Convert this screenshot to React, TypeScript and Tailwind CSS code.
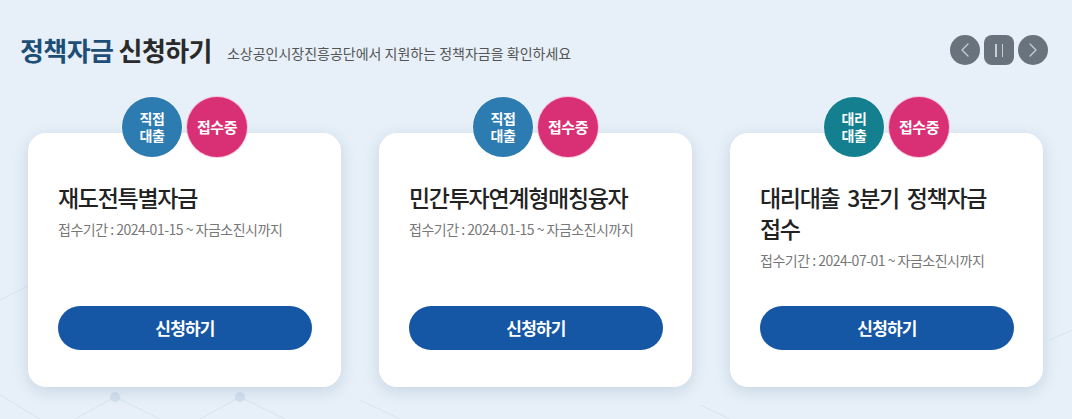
import { ChevronLeft, ChevronRight } from 'lucide-react';

interface Fund {
    type: [string, string];
    typeColor: string;
    title: string;
    period: string;
}

const funds: Fund[] = [
    { type: ['직접', '대출'], typeColor: 'bg-[#2c7bb1]', title: '재도전특별자금', period: '접수기간 : 2024-01-15 ~ 자금소진시까지' },
    { type: ['직접', '대출'], typeColor: 'bg-[#2c7bb1]', title: '민간투자연계형매칭융자', period: '접수기간 : 2024-01-15 ~ 자금소진시까지' },
    { type: ['대리', '대출'], typeColor: 'bg-[#137f8f]', title: '대리대출 3분기 정책자금 접수', period: '접수기간 : 2024-07-01 ~ 자금소진시까지' },
];

function Network() {
    // faint decorative mesh behind the cards
    return (
        <svg className="pointer-events-none absolute inset-0 h-full w-full" viewBox="0 0 1072 419" preserveAspectRatio="none">
            <g stroke="#d6e3ef" strokeWidth="1" fill="none">
                <path d="M0 300 L60 270" />
                <path d="M0 395 L40 419" />
                <path d="M115 397 L75 419" />
                <path d="M115 397 L160 419" />
                <path d="M240 397 L200 419" />
                <path d="M240 397 L285 419" />
                <path d="M1072 330 L1050 340" />
                <path d="M360 400 L400 419" />
                <path d="M700 405 L730 419" />
            </g>
            <g fill="#d3e1ed">
                <circle cx="115" cy="397" r="5" />
                <circle cx="240" cy="397" r="5" />
            </g>
        </svg>
    );
}

function FundCard({ fund }: { fund: Fund }) {
    return (
        <div className="flex w-[313px] flex-col">
            <div className="relative z-10 -mb-[24px] flex justify-center gap-[5px]">
                <div className={`flex h-[60px] w-[60px] items-center justify-center rounded-full ${fund.typeColor} text-center text-[14px] leading-[17px] font-semibold tracking-[-0.5px] text-white ring-1 ring-white/30`}>
                    <span>
                        {fund.type[0]}
                        <br />
                        {fund.type[1]}
                    </span>
                </div>
                <div className="flex h-[60px] w-[60px] items-center justify-center rounded-full bg-[#d92f74] text-[15px] font-semibold tracking-[-0.5px] text-white ring-1 ring-[#f7a8c8]/60">
                    접수중
                </div>
            </div>
            <div className="flex h-[254px] flex-col rounded-[18px] bg-white pt-[49px] pr-[29px] pb-[37px] pl-[30px] shadow-[0_4px_16px_rgba(30,70,120,0.16)]">
                <h3 className="text-[23px] leading-[31px] font-medium tracking-[-1.3px] break-keep text-[#222] [word-spacing:4px]">{fund.title}</h3>
                <p className="mt-[5px] text-[14px] leading-[22px] tracking-[-0.5px] text-[#777]">{fund.period}</p>
                <button className="mt-auto h-[44px] w-full rounded-full bg-[#1657a5] text-[17px] font-bold tracking-[-0.8px] text-white">
                    신청하기
                </button>
            </div>
        </div>
    );
}

export default function App() {
    return (
        <div className="relative h-[419px] w-[1072px] overflow-hidden bg-[#e7f0f8] font-['Noto_Sans_CJK_KR',sans-serif]">
            <Network />
            <div className="relative flex items-center justify-between pt-[34px] pr-6 pl-5">
                <div className="flex items-end gap-[15px]">
                    <h2 className="text-[26px] leading-[32px] font-bold tracking-[-0.6px] text-[#2a2a2a]">
                        <span className="text-[#1d4e77]">정책자금</span> 신청하기
                    </h2>
                    <p className="pb-[3px] text-[14px] leading-[20px] tracking-[0px] text-[#555]">소상공인시장진흥공단에서 지원하는 정책자금을 확인하세요</p>
                </div>
                <div className="flex items-center gap-[4px]">
                    <button className="flex h-[30px] w-[30px] items-center justify-center rounded-full bg-[#68737d] text-[#c8ced4]">
                        <ChevronLeft className="h-[24px] w-[24px]" strokeWidth={1.3} />
                    </button>
                    <button className="flex h-[30px] w-[30px] items-center justify-center gap-[5px] rounded-[8px] bg-[#68737d]">
                        <span className="h-[13px] w-[1.5px] bg-[#c8ced4]" />
                        <span className="h-[13px] w-[1.5px] bg-[#c8ced4]" />
                    </button>
                    <button className="flex h-[30px] w-[30px] items-center justify-center rounded-full bg-[#68737d] text-[#c8ced4]">
                        <ChevronRight className="h-[24px] w-[24px]" strokeWidth={1.3} />
                    </button>
                </div>
            </div>
            <div className="relative mt-[31px] flex gap-[38px] px-[28px]">
                {funds.map((f) => (
                    <FundCard key={f.title} fund={f} />
                ))}
            </div>
        </div>
    );
}
